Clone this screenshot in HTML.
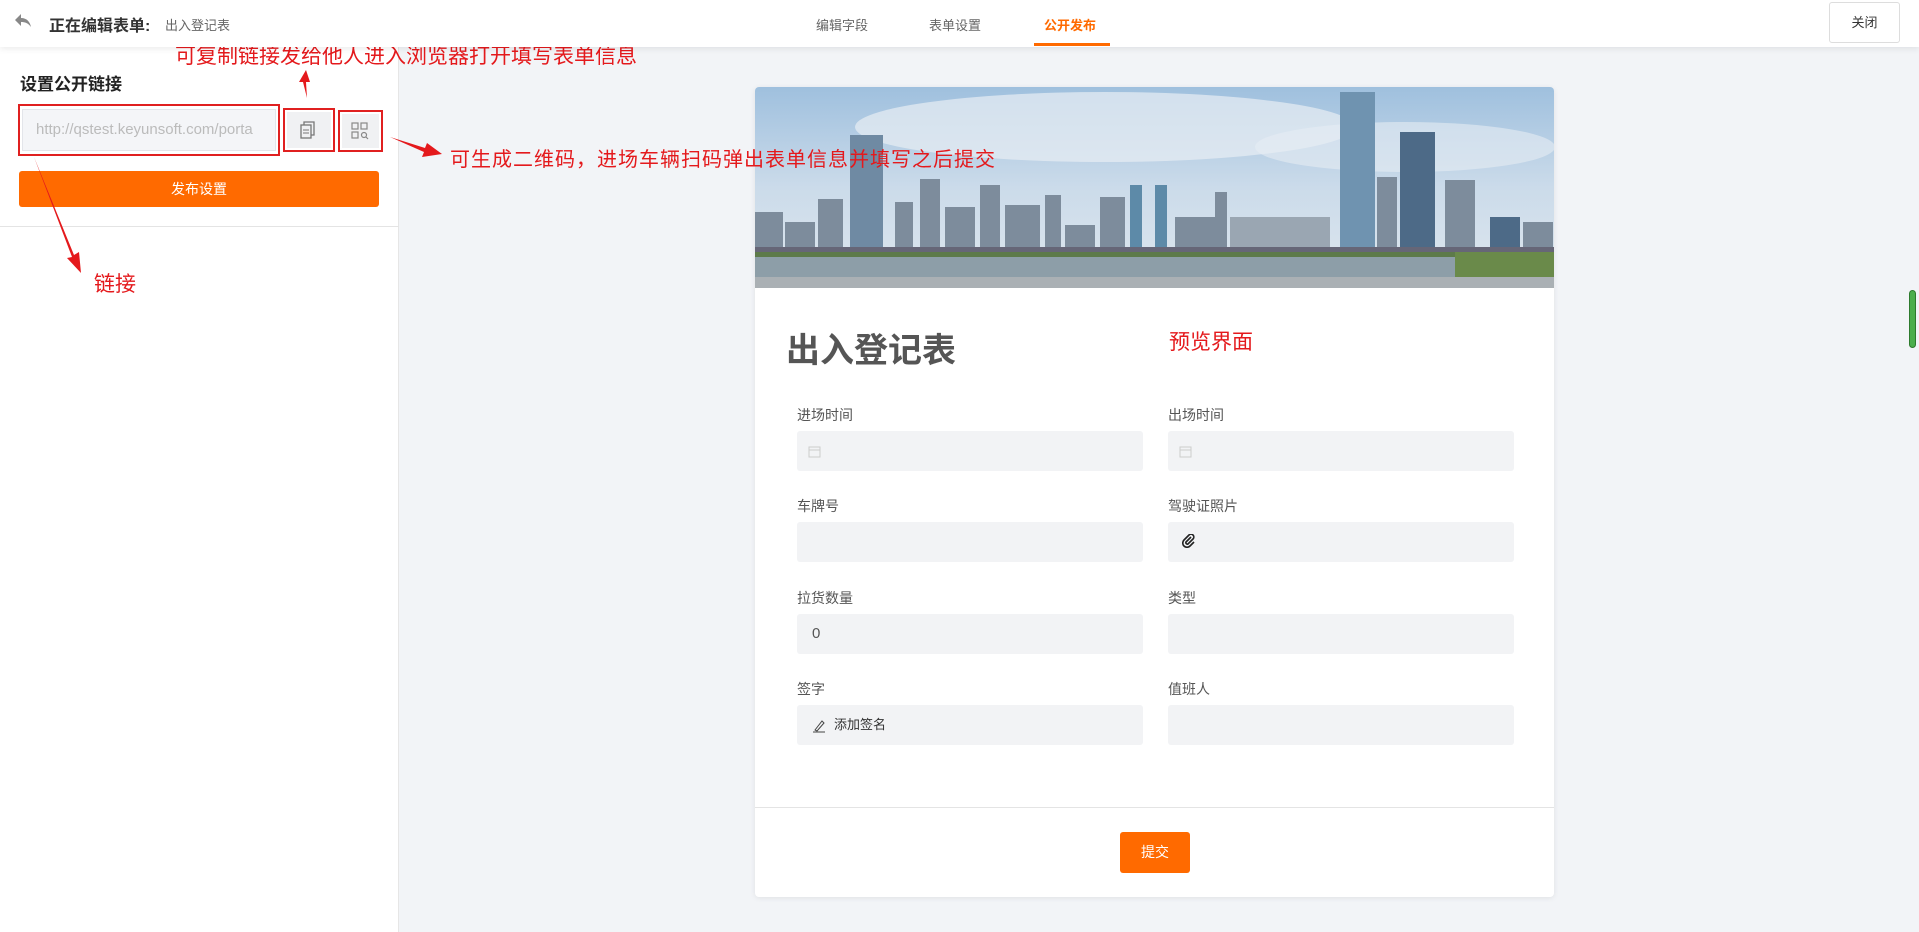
<!DOCTYPE html>
<html><head><meta charset="utf-8">
<style>
*{box-sizing:border-box;margin:0;padding:0}
body{width:1919px;height:932px;overflow:hidden;background:#f2f4f7;font-family:"Liberation Sans","Noto Sans CJK SC",sans-serif;position:relative;color:#333}
.top{position:absolute;left:0;top:0;width:1919px;height:47px;background:#fff;box-shadow:0 2px 6px rgba(0,0,0,.08);z-index:2}
.abs{position:absolute}
.left{position:absolute;left:0;top:47px;width:399px;height:885px;background:#fff;border-right:1px solid #e6e6e6}
.card{position:absolute;left:755px;top:87px;width:799px;height:810px;background:#fff;border-radius:4px;box-shadow:0 1px 6px rgba(0,0,0,.08);overflow:hidden}
.lbl{position:absolute;font-size:14px;color:#555}
.inp{position:absolute;width:346px;height:40px;background:#f2f3f5;border-radius:3px}
.red{color:#e4191c;position:absolute;white-space:nowrap}
</style></head><body>
<div class="top">
  <svg class="abs" style="left:14px;top:13px" width="18" height="16" viewBox="0 0 18 16"><path d="M7 1 L1 7 L7 13 L7 9 C11 9 14 10 17 14 C16 9 13 5 7 5Z" fill="#888"/></svg>
  <div class="abs" style="left:49px;top:12px;font-size:16px;font-weight:bold;color:#333">正在编辑表单:</div>
  <div class="abs" style="left:165px;top:15px;font-size:13px;color:#666">出入登记表</div>
  <div class="abs" style="left:816px;top:15px;font-size:13px;color:#666">编辑字段</div>
  <div class="abs" style="left:929px;top:15px;font-size:13px;color:#666">表单设置</div>
  <div class="abs" style="left:1044px;top:15px;font-size:13px;color:#ff6a00;font-weight:bold">公开发布</div>
  <div class="abs" style="left:1034px;top:43px;width:76px;height:3px;background:#ff6a00"></div>
  <div class="abs" style="left:1829px;top:2px;width:71px;height:41px;border:1px solid #ddd;border-radius:3px;font-size:13px;text-align:center;line-height:39px;color:#333">关闭</div>
</div>
<div class="left">
  <div class="abs" style="left:20px;top:23px;font-size:17px;font-weight:bold;color:#222">设置公开链接</div>
  <div class="abs" style="left:18px;top:57px;width:262px;height:52px;border:2px solid #e02020"></div>
  <div class="abs" style="left:22px;top:62px;width:254px;height:42px;background:#f4f5f8;border:1px solid #e3e5ea;font-size:15px;color:#bbb;line-height:40px;padding-left:13px;overflow:hidden;white-space:nowrap">http://qstest.keyunsoft.com/porta</div>
  <div class="abs" style="left:283px;top:61px;width:52px;height:44px;border:2px solid #e02020"></div>
  <div class="abs" style="left:287px;top:65px;width:44px;height:36px;background:#f0f1f3"></div>
  <svg class="abs" style="left:298px;top:74px" width="18" height="18" viewBox="0 0 18 18"><rect x="3" y="4" width="10" height="13" fill="none" stroke="#777" stroke-width="1.3"/><path d="M6 4V1h10v13h-3" fill="none" stroke="#777" stroke-width="1.3"/><path d="M5 9h6M5 12h6" stroke="#777"/></svg>
  <div class="abs" style="left:338px;top:63px;width:45px;height:42px;border:2px solid #e02020"></div>
  <div class="abs" style="left:342px;top:67px;width:37px;height:34px;background:#f0f1f3"></div>
  <svg class="abs" style="left:351px;top:75px" width="18" height="18" viewBox="0 0 18 18"><g fill="none" stroke="#888" stroke-width="1.2"><rect x="1" y="1" width="6" height="6"/><rect x="10" y="1" width="6" height="6"/><rect x="1" y="10" width="6" height="6"/><circle cx="13" cy="13" r="2.5"/><path d="M15 15l2 2"/></g></svg>
  <div class="abs" style="left:19px;top:124px;width:360px;height:36px;background:#ff6a00;border-radius:3px;color:#fff;font-size:14px;text-align:center;line-height:36px">发布设置</div>
  <div class="abs" style="left:0;top:179px;width:399px;height:1px;background:#e4e4e4"></div>
</div>
<div class="card">
  <svg width="799" height="201" viewBox="0 0 799 201" style="display:block">
    <defs><linearGradient id="sk" x1="0" y1="0" x2="0" y2="1"><stop offset="0" stop-color="#9fc0de"/><stop offset=".5" stop-color="#cbdbea"/><stop offset="1" stop-color="#dfe7ee"/></linearGradient></defs>
    <rect width="799" height="201" fill="url(#sk)"/>
    <ellipse cx="350" cy="40" rx="250" ry="35" fill="#e8eef4" opacity=".7"/>
    <ellipse cx="650" cy="60" rx="150" ry="25" fill="#e6edf3" opacity=".6"/>
    <g fill="#7d8c9c">
      <rect x="0" y="125" width="28" height="45"/><rect x="30" y="135" width="30" height="35"/>
      <rect x="63" y="112" width="25" height="60"/><rect x="95" y="48" width="33" height="122" fill="#6f8aa3"/>
      <rect x="140" y="115" width="18" height="55"/><rect x="165" y="92" width="20" height="78"/>
      <rect x="190" y="120" width="30" height="50"/><rect x="225" y="98" width="20" height="72"/>
      <rect x="250" y="118" width="35" height="52"/><rect x="290" y="108" width="16" height="62"/>
      <rect x="310" y="138" width="30" height="32"/><rect x="345" y="110" width="25" height="60"/>
      <rect x="375" y="98" width="12" height="72" fill="#5d8aa8"/><rect x="400" y="98" width="12" height="72" fill="#5d8aa8"/>
      <rect x="420" y="130" width="40" height="40"/><rect x="460" y="105" width="12" height="65"/>
      <rect x="475" y="130" width="100" height="40" fill="#9aa6b2"/>
      <rect x="585" y="5" width="35" height="165" fill="#6f93b0"/>
      <rect x="622" y="90" width="20" height="80"/><rect x="645" y="45" width="35" height="125" fill="#4d6a87"/>
      <rect x="690" y="93" width="30" height="77"/><rect x="735" y="130" width="30" height="40" fill="#4d6a87"/><rect x="768" y="135" width="30" height="35"/>
    </g>
    <rect x="0" y="160" width="799" height="12" fill="#667"/>
    <rect x="0" y="165" width="799" height="6" fill="#5d7a4a"/>
    <rect x="0" y="170" width="799" height="20" fill="#8d9ea8"/>
    <rect x="700" y="165" width="99" height="36" fill="#6a8a4a"/>
    <rect x="0" y="190" width="799" height="11" fill="#aab0b4"/>
  </svg>
  <div class="abs" style="left:31px;top:236px;font-size:34px;font-weight:bold;color:#555">出入登记表</div>
  <div class="lbl" style="left:42px;top:318px">进场时间</div>
  <div class="lbl" style="left:413px;top:318px">出场时间</div>
  <div class="inp" style="left:42px;top:344px"></div><div class="inp" style="left:413px;top:344px"></div>
  <svg class="abs" style="left:53px;top:358px" width="13" height="13"><rect x="1" y="2" width="11" height="10" fill="none" stroke="#ccc"/><path d="M1 5h11" stroke="#ccc"/></svg>
  <svg class="abs" style="left:424px;top:358px" width="13" height="13"><rect x="1" y="2" width="11" height="10" fill="none" stroke="#ccc"/><path d="M1 5h11" stroke="#ccc"/></svg>
  <div class="lbl" style="left:42px;top:409px">车牌号</div>
  <div class="lbl" style="left:413px;top:409px">驾驶证照片</div>
  <div class="inp" style="left:42px;top:435px"></div><div class="inp" style="left:413px;top:435px"></div>
  <svg class="abs" style="left:427px;top:447px" width="14" height="14" viewBox="0 0 14 14"><path d="M9 3L4 8a1.5 1.5 0 0 0 2 2l5-5a2.8 2.8 0 0 0-4-4L2 6a4 4 0 0 0 6 6l4-4" fill="none" stroke="#222" stroke-width="1.6"/></svg>
  <div class="lbl" style="left:42px;top:501px">拉货数量</div>
  <div class="lbl" style="left:413px;top:501px">类型</div>
  <div class="inp" style="left:42px;top:527px;font-size:15px;color:#555;line-height:40px;padding-left:15px">0</div><div class="inp" style="left:413px;top:527px"></div>
  <div class="lbl" style="left:42px;top:592px">签字</div>
  <div class="lbl" style="left:413px;top:592px">值班人</div>
  <div class="inp" style="left:42px;top:618px;font-size:13px;color:#333;line-height:40px;padding-left:37px">添加签名</div><div class="inp" style="left:413px;top:618px"></div>
  <svg class="abs" style="left:57px;top:632px" width="14" height="14" viewBox="0 0 14 14"><path d="M3 11L10 2l2 2-7 8zM1 13h12" fill="none" stroke="#444" stroke-width="1"/></svg>
  <div class="abs" style="left:0;top:720px;width:799px;height:1px;background:#e4e4e4"></div>
  <div class="abs" style="left:365px;top:745px;width:70px;height:41px;background:#ff6a00;border-radius:3px;color:#fff;font-size:14px;text-align:center;line-height:41px">提交</div>
</div>
<div class="red" style="left:1169px;top:326px;font-size:21px">预览界面</div>
<div class="red" style="left:175px;top:40px;font-size:21px">可复制链接发给他人进入浏览器打开填写表单信息</div>
<div class="red" style="left:450px;top:143px;font-size:20px;letter-spacing:1px">可生成二维码，进场车辆扫码弹出表单信息并填写之后提交</div>
<div class="red" style="left:94px;top:268px;font-size:21px">链接</div>
<svg class="abs" style="left:0;top:0;z-index:3" width="1919" height="932">
  <path d="M307 98 L303 82 L299 82 L306 70 L310 82 L306 82 Z" fill="#e4191c"/>
  <path d="M390 137 L425 148 L427 143 L442 154 L422 157 L424 152 Z" fill="#e4191c"/>
  <path d="M34 157 L74 255 L79 252 L81 273 L67 258 L72 257 Z" fill="#e4191c"/>
</svg>
<div class="abs" style="left:1909px;top:290px;width:7px;height:58px;background:#4cae4c;border-radius:4px;border:1px solid #2d7a2d"></div>
</body></html>
